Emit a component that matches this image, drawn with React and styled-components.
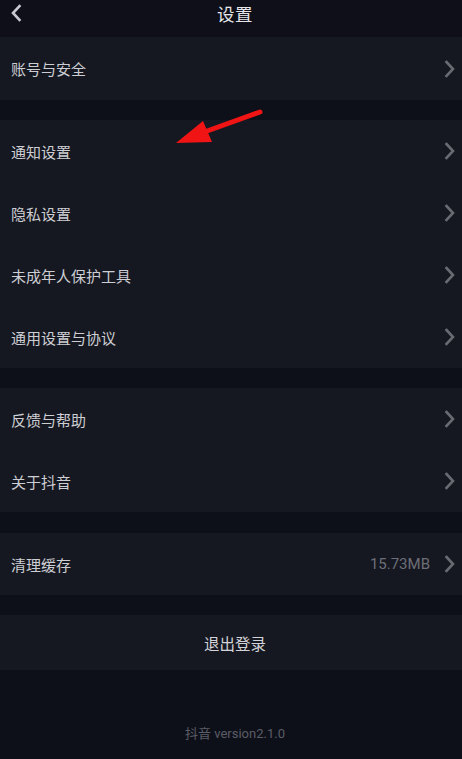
import React from "react"
import styled, {createGlobalStyle} from "styled-components"

const GlobalStyle = createGlobalStyle`
    html, body {
        margin: 0;
        padding: 0;
        background: #0e1019;
    }
    body {
        font-family: "Noto Sans CJK SC", "Noto Sans", "Liberation Sans", sans-serif;
        -webkit-font-smoothing: antialiased;
    }
`

// each group is a card; the gap between them shows the page background
const groups = [
    {rowHeight: 63, items: [{label: "账号与安全"}]},
    {
        rowHeight: 62,
        items: [
            {label: "通知设置"},
            {label: "隐私设置"},
            {label: "未成年人保护工具"},
            {label: "通用设置与协议"},
        ],
    },
    {rowHeight: 62, items: [{label: "反馈与帮助"}, {label: "关于抖音"}]},
    {rowHeight: 62, extraTop: 1, items: [{label: "清理缓存", value: "15.73MB"}]},
]

const Chevron = ({left, color}) => (
    <svg width="12" height="18" viewBox="0 0 12 18" fill="none">
        <path
            d={left ? "M9.5 2 L3 9 L9.5 16" : "M2.5 2 L9 9 L2.5 16"}
            stroke={color}
            strokeWidth="2.6"
            strokeLinecap="square"
        />
    </svg>
)

const App = () => {
    return (
        <Page>
            <GlobalStyle />
            <Header>
                <BackButton type="button">
                    <Chevron left color="#c9c9d1" />
                </BackButton>
                <Title>设置</Title>
            </Header>
            <Content>
                {groups.map((group, gi) => (
                    <Group key={gi} $extraTop={group.extraTop}>
                        {group.items.map((item) => (
                            <Row key={item.label} $height={group.rowHeight}>
                                <Label>{item.label}</Label>
                                <Right>
                                    {item.value ? <Value>{item.value}</Value> : null}
                                    <Chevron color="#696b73" />
                                </Right>
                            </Row>
                        ))}
                    </Group>
                ))}
                <Logout type="button">退出登录</Logout>
            </Content>
            <Version>抖音 version2.1.0</Version>
            <Arrow width="462" height="160" viewBox="0 0 462 160">
                <line
                    x1="260"
                    y1="112"
                    x2="196"
                    y2="135"
                    stroke="#f01414"
                    strokeWidth="5"
                    strokeLinecap="round"
                />
                <polygon points="176,143 203,121 212,142" fill="#f01414" />
            </Arrow>
        </Page>
    )
}

const Page = styled.div`
    position: relative;
    width: 462px;
    height: 759px;
    background: #0e1019;
    display: flex;
    flex-direction: column;
    overflow: hidden;
`

const Header = styled.header`
    position: relative;
    height: 37px;
    background: #0f0f19;
    display: flex;
    align-items: center;
    justify-content: center;
`

const BackButton = styled.button`
    position: absolute;
    left: 10px;
    top: 4px;
    padding: 0;
    background: transparent;
    border: none;
    display: flex;
`

const Title = styled.h1`
    margin: 0 0 10px 8px;
    font-size: 17.5px;
    font-weight: 400;
    color: #e6e6ea;
    letter-spacing: 0.5px;
`

const Content = styled.div`
    display: flex;
    flex-direction: column;
    gap: 20px;
`

const Group = styled.section`
    margin-top: ${(p) => p.$extraTop || 0}px;
    background: #161821;
    display: flex;
    flex-direction: column;
`

const Row = styled.div`
    height: ${(p) => p.$height}px;
    padding: 0 6px 0 11px;
    display: flex;
    align-items: center;
    justify-content: space-between;
`

const Label = styled.span`
    font-size: 15px;
    color: #cdced3;
`

const Right = styled.div`
    display: flex;
    align-items: center;
    gap: 14px;
`

const Value = styled.span`
    font-family: "Roboto", "Liberation Sans", sans-serif;
    font-size: 15px;
    color: #6d6f78;
`

const Logout = styled.button`
    height: 55px;
    padding: 0 0 0 8px;
    background: #161821;
    border: none;
    font-family: inherit;
    font-size: 15.5px;
    color: #d2d3d8;
`

const Version = styled.div`
    margin-top: auto;
    padding: 0 0 17px 8px;
    text-align: center;
    font-size: 13px;
    color: #5b5d66;
    font-family: "Roboto", "Noto Sans CJK SC", sans-serif;
`

const Arrow = styled.svg`
    position: absolute;
    left: 0;
    top: 0;
    pointer-events: none;
`

export default App
